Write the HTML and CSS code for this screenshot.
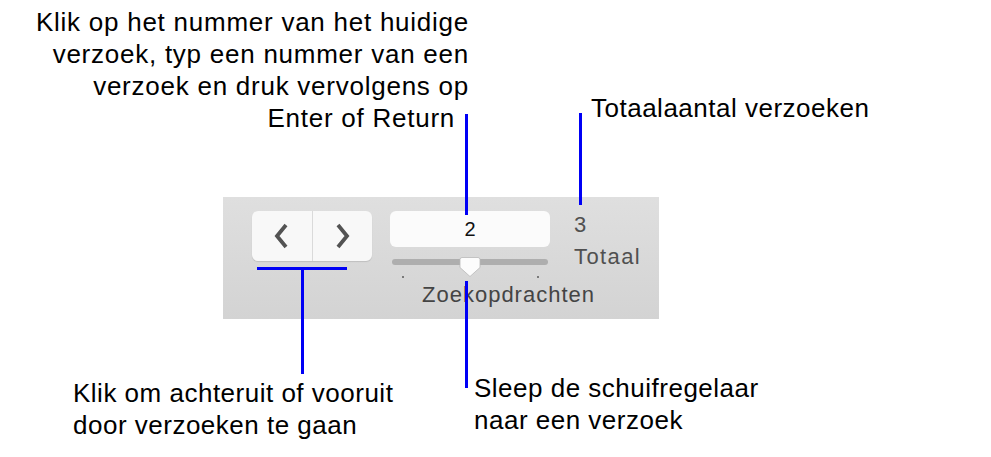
FILE: index.html
```html
<!DOCTYPE html>
<html lang="nl">
<head>
    <meta charset="UTF-8">
    <meta name="viewport" content="width=device-width, initial-scale=1.0">
    <title>Zoekopdrachten navigeren</title>
    <link rel="stylesheet" href="styles.css">
</head>
<body>
    <div class="stage">
        <!-- bovenste toelichtingen -->
        <div class="top">
            <p class="note note-entry">Klik op het nummer van het huidige<br>verzoek, typ een nummer van een<br>verzoek en druk vervolgens op<br><span class="last">Enter of Return</span></p>
            <p class="note note-total">Totaalaantal verzoeken</p>
        </div>

        <!-- de werkbalk zelf -->
        <div class="toolbar">
            <div class="nav">
                <button class="nav-btn" aria-label="Vorige">
                    <svg width="18" height="28" viewBox="0 0 18 28"><polyline points="13,3 4,14 13,25"/></svg>
                </button>
                <button class="nav-btn" aria-label="Volgende">
                    <svg width="18" height="28" viewBox="0 0 18 28"><polyline points="5,3 14,14 5,25"/></svg>
                </button>
            </div>
            <div class="search">
                <div class="field">2</div>
                <div class="slider">
                    <span class="track"></span>
                    <span class="tick tick-start"></span>
                    <span class="tick tick-end"></span>
                    <svg class="thumb" width="22" height="22" viewBox="0 0 22 22"><path d="M3 1.5 h16 a2 2 0 0 1 2 2 v8 l-10 9 l-10 -9 v-8 a2 2 0 0 1 2 -2 z"/></svg>
                </div>
                <div class="label">Zoekopdrachten</div>
            </div>
            <div class="total">
                <div>3</div>
                <div>Totaal</div>
            </div>
        </div>

        <!-- onderste toelichtingen -->
        <div class="bottom">
            <p class="note note-nav">Klik om achteruit of vooruit<br>door verzoeken te gaan</p>
            <p class="note note-slider">Sleep de schuifregelaar<br>naar een verzoek</p>
        </div>

        <!-- verbindingslijnen -->
        <span class="lead lead-entry"></span>
        <span class="lead lead-total"></span>
        <span class="lead lead-nav-bar"></span>
        <span class="lead lead-nav"></span>
        <span class="lead lead-slider"></span>
    </div>
</body>
</html>
```

FILE: styles.css
```css
body {
    margin: 0;
    background: #fff;
    font-family: 'Liberation Sans', Arial, sans-serif;
}
.stage {
    position: relative;
    width: 991px;
    height: 457px;
    overflow: hidden;
}
p {
    margin: 0;
}
.note {
    font-size: 26px;
    line-height: 32px;
    letter-spacing: 0.5px;
    color: #000;
    white-space: nowrap;
}

/* boven */
.top {
    display: flex;
    align-items: flex-start;
    height: 197px;
}
.note-entry {
    width: 469px;
    margin-top: 6px;
    text-align: right;
    letter-spacing: 0.75px;
}
.note-entry .last {
    padding-right: 14px;
}
.note-total {
    margin-left: 122px;
    margin-top: 92px;
}

/* werkbalk */
.toolbar {
    display: flex;
    align-items: flex-start;
    box-sizing: border-box;
    width: 436px;
    height: 122px;
    margin-left: 223px;
    padding: 14px 0 0 29px;
    background: linear-gradient(#dfdfdf, #d3d3d3);
}
.nav {
    display: flex;
    width: 120px;
    height: 50px;
    border-radius: 6px;
    background: #f8f8f8;
    box-shadow: 0 1px 1px rgba(0, 0, 0, 0.12);
    overflow: hidden;
}
.nav-btn {
    flex: 1;
    display: flex;
    align-items: center;
    justify-content: center;
    padding: 0;
    border: 0;
    background: transparent;
}
.nav-btn + .nav-btn {
    border-left: 1px solid #dadada;
}
.nav-btn svg polyline {
    fill: none;
    stroke: #535353;
    stroke-width: 3.8;
}
.search {
    width: 160px;
    margin-left: 18px;
}
.field {
    height: 36px;
    line-height: 36px;
    border-radius: 6px;
    background: #fbfbfb;
    text-align: center;
    font-size: 20px;
    color: #111;
}
.slider {
    position: relative;
    height: 24px;
    margin-top: 10px;
}
.track {
    position: absolute;
    left: 2px;
    right: 2px;
    top: 2px;
    height: 6px;
    border-radius: 3px;
    background: #aeaeae;
}
.tick {
    position: absolute;
    top: 19px;
    width: 2px;
    height: 2px;
    background: #7a7a7a;
}
.tick-start {
    left: 12px;
}
.tick-end {
    left: 147px;
}
.thumb {
    position: absolute;
    left: 69px;
    top: -1px;
}
.thumb path {
    fill: #fcfcfc;
    stroke: #b9b9b9;
    stroke-width: 0.8;
}
.label {
    margin: 1px 0 0 32px;
    font-size: 22px;
    line-height: 26px;
    letter-spacing: 1px;
    color: #444;
    white-space: nowrap;
}
.total {
    margin: -2px 0 0 24px;
    font-size: 22px;
    line-height: 32px;
    letter-spacing: 1.4px;
    color: #505050;
}

/* onder */
.bottom {
    display: flex;
    align-items: flex-start;
    padding-left: 73px;
}
.note-nav {
    width: 401px;
    margin-top: 58px;
}
.note-slider {
    margin-top: 53px;
}

/* blauwe lijnen */
.lead {
    position: absolute;
    background: #0000f5;
}
.lead-entry {
    left: 465px;
    top: 114px;
    width: 3px;
    height: 101px;
}
.lead-total {
    left: 579px;
    top: 113px;
    width: 3px;
    height: 92px;
}
.lead-nav-bar {
    left: 257px;
    top: 267px;
    width: 90px;
    height: 3px;
}
.lead-nav {
    left: 301px;
    top: 267px;
    width: 3px;
    height: 107px;
}
.lead-slider {
    left: 465px;
    top: 281px;
    width: 3px;
    height: 107px;
}
```
